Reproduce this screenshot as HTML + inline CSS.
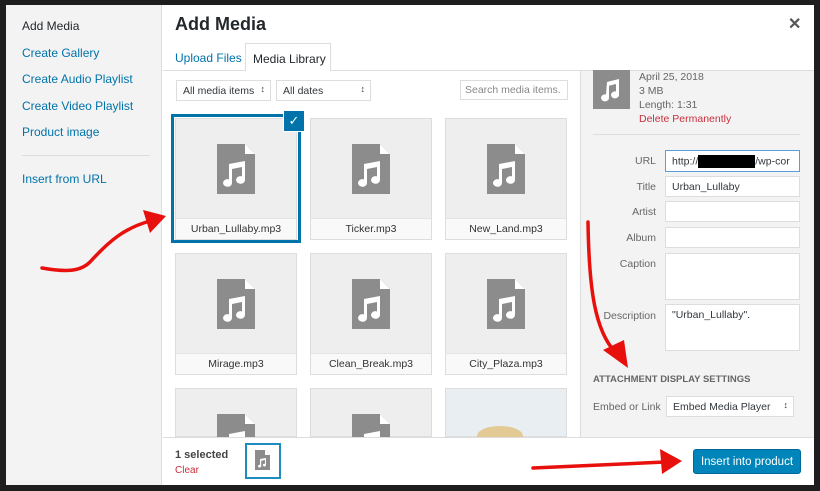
<!DOCTYPE html>
<html><head><meta charset="utf-8"><style>
*{box-sizing:border-box;margin:0;padding:0}
body{width:820px;height:491px;background:#1e1e1e;font-family:"Liberation Sans",sans-serif;position:relative;overflow:hidden;font-size:11px;color:#23282d}
.a{position:absolute;white-space:nowrap}
.modal{left:6px;top:5px;width:808px;height:480px;background:#fff}
.side{left:6px;top:5px;width:156px;height:480px;background:#f3f3f3;border-right:1px solid #ddd}
.side div{position:absolute;left:16px;font-size:12px;color:#0073aa}
.tile{position:absolute;width:122px;height:122px;background:#eee;box-shadow:inset 0 0 0 1px #ddd}
.tile .lb{position:absolute;left:1px;right:1px;bottom:1px;height:21px;background:#f9f9f9;border-top:1px solid #e5e5e5;text-align:center;font-size:10.5px;line-height:21px;color:#333}
.tile svg{position:absolute;left:42px;top:26px}
.lab{position:absolute;width:60px;text-align:right;left:596px;font-size:10.5px;color:#666}
.in{position:absolute;left:665px;width:135px;background:#fff;border:1px solid #ddd;font-size:10.5px;padding:4px 6px;color:#32373c;white-space:nowrap;overflow:hidden}
.sel{position:absolute;background:#fff;border:1px solid #ddd;font-size:10.5px;padding:4px 6px;color:#32373c}
.sel:after{content:"\2195";position:absolute;right:5px;top:3px;font-size:9px}
</style></head><body>
<div class="a modal"></div>
<div class="a side">
<div style="top:14px;color:#23282d">Add Media</div>
<div style="top:41px">Create Gallery</div>
<div style="top:67px">Create Audio Playlist</div>
<div style="top:94px">Create Video Playlist</div>
<div style="top:120px">Product image</div>
<div style="top:150px;left:16px;width:128px;border-top:1px solid #ddd"></div>
<div style="top:167px">Insert from URL</div>
</div>
<div class="a" style="left:175px;top:14px;font-size:18px;font-weight:bold;color:#23282d">Add Media</div>
<div class="a" style="left:788px;top:14px;font-size:16px;font-weight:bold;color:#555">✕</div>
<div class="a" style="left:163px;top:70px;width:651px;border-top:1px solid #ddd"></div>
<div class="a" style="left:175px;top:51px;font-size:12px;color:#0073aa">Upload Files</div>
<div class="a" style="left:245px;top:43px;width:86px;height:28px;background:#fff;border:1px solid #ddd;border-bottom:none;font-size:12px;padding:8px 7px">Media Library</div>
<div class="sel" style="left:176px;top:80px;width:95px;height:21px">All media items</div>
<div class="sel" style="left:276px;top:80px;width:95px;height:21px">All dates</div>
<div class="in" style="left:460px;top:80px;width:108px;height:20px;color:#888;padding:3px 4px">Search media items.</div>
<div class="a" style="left:580px;top:71px;width:234px;height:366px;background:#f3f3f3;border-left:1px solid #ddd"></div>

<div id="g"></div>
<div class="a" style="left:171px;top:114px;width:130px;height:129px;border:3px solid #0073aa"></div>
<div class="a" style="left:284px;top:111px;width:20px;height:20px;background:#0073aa;color:#fff;text-align:center;font-size:13px;line-height:20px;box-shadow:0 0 0 1px #fff">✓</div>

<svg class="a" style="left:593px;top:70px" width="37" height="39"><rect width="37" height="39" fill="#8c8c8c"/><path d="M14 12 L26 9 V25 A4 3.5 0 1 1 23 21.5 V14 L16 15.7 V28 A4 3.5 0 1 1 13 24.5 Z" fill="#fff"/></svg>
<div class="a" style="left:639px;top:70px;font-size:10.5px;line-height:14px;color:#666">April 25, 2018<br>3 MB<br>Length: 1:31<br><span style="color:#c9303c">Delete Permanently</span></div>
<div class="a" style="left:593px;top:134px;width:207px;border-top:1px solid #ddd"></div>
<div class="lab" style="top:155px">URL</div>
<div class="in" style="top:150px;height:22px;border-color:#5b9dd9">http://<span style="display:inline-block;width:57px;height:13px;background:#000;vertical-align:middle"></span>/wp-cor</div>
<div class="lab" style="top:181px">Title</div>
<div class="in" style="top:176px;height:21px">Urban_Lullaby</div>
<div class="lab" style="top:206px">Artist</div>
<div class="in" style="top:201px;height:21px"></div>
<div class="lab" style="top:232px">Album</div>
<div class="in" style="top:227px;height:21px"></div>
<div class="lab" style="top:258px">Caption</div>
<div class="in" style="top:253px;height:47px"></div>
<div class="lab" style="top:310px;left:586px;width:70px">Description</div>
<div class="in" style="top:304px;height:47px">"Urban_Lullaby".</div>
<div class="a" style="left:593px;top:374px;font-size:9.5px;font-weight:bold;color:#666">ATTACHMENT DISPLAY SETTINGS</div>
<div class="a" style="left:593px;top:401px;font-size:10.5px;color:#666">Embed or Link</div>
<div class="sel" style="left:666px;top:396px;width:128px;height:21px">Embed Media Player</div>

<div class="a" style="left:163px;top:437px;width:651px;height:48px;background:#fff;border-top:1px solid #ddd"></div>
<div class="a" style="left:175px;top:449px;font-size:11px;font-weight:bold;color:#444">1 selected</div>
<div class="a" style="left:175px;top:465px;font-size:10px;color:#c9303c">Clear</div>
<div class="a" style="left:245px;top:443px;width:36px;height:36px;border:2px solid #1e8cbe;background:#fff"></div>
<svg class="a" style="left:255px;top:450px" width="15" height="20"><path d="M0 0H10L15 5V20H0Z" fill="#8c8c8c"/><path d="M10 0V5H15Z" fill="#fff"/><path d="M5 9L11 8V15A1.6 1.4 0 1 1 10 13.8V10L6.2 10.8V16A1.6 1.4 0 1 1 5 14.8Z" fill="#fff"/></svg>
<div class="a" style="left:693px;top:449px;width:108px;height:25px;background:#0085ba;border:1px solid #006799;border-radius:3px;color:#fff;font-size:11.5px;text-align:center;line-height:24px">Insert into product</div>

<svg class="a" style="left:0;top:0" width="820" height="491">
<g stroke="#e8100c" stroke-width="3.5" fill="none" stroke-linecap="round">
<path d="M42 268 C65 272 80 272 90 262 C110 240 125 228 150 221"/>
<path d="M588 222 C589 290 595 330 615 352"/>
<path d="M533 468 L665 462"/>
</g>
<g fill="#e8100c">
<path d="M166 216 L143 210 L150 233 Z"/>
<path d="M628 368 L603 350 L624 340 Z"/>
<path d="M682 461 L660 449 L662 474 Z"/>
</g>
</svg>
<script>
var g=document.getElementById('g'),xs=[175,310,445],ys=[118,253,388],n=['Urban_Lullaby.mp3','Ticker.mp3','New_Land.mp3','Mirage.mp3','Clean_Break.mp3','City_Plaza.mp3'];
var ic='<svg width="38" height="50"><path d="M0 0H28L38 10V50H0Z" fill="#8c8c8c"/><path d="M28 0V10H38Z" fill="#fff"/><path d="M12 20L28 17V36A4.5 3.8 0 1 1 25 32.4V23L15 25V39A4.5 3.8 0 1 1 12 35.4Z" fill="#fff"/></svg>';
var h='';
for(var r=0;r<3;r++)for(var c=0;c<3;c++){var i=r*3+c;var H=r==2?49:122;
if(i==8){h+='<div class="tile" style="left:445px;top:388px;height:49px;background:#e9eef3;overflow:hidden"><div style="position:absolute;left:32px;top:38px;width:46px;height:20px;border-radius:50%;background:#e3c994"></div></div>';continue;}
h+='<div class="tile" style="left:'+xs[c]+'px;top:'+ys[r]+'px;height:'+H+'px;overflow:hidden">'+ic+(i<6?'<div class="lb">'+n[i]+'</div>':'')+'</div>';}
g.innerHTML=h;
</script>
</body></html>
